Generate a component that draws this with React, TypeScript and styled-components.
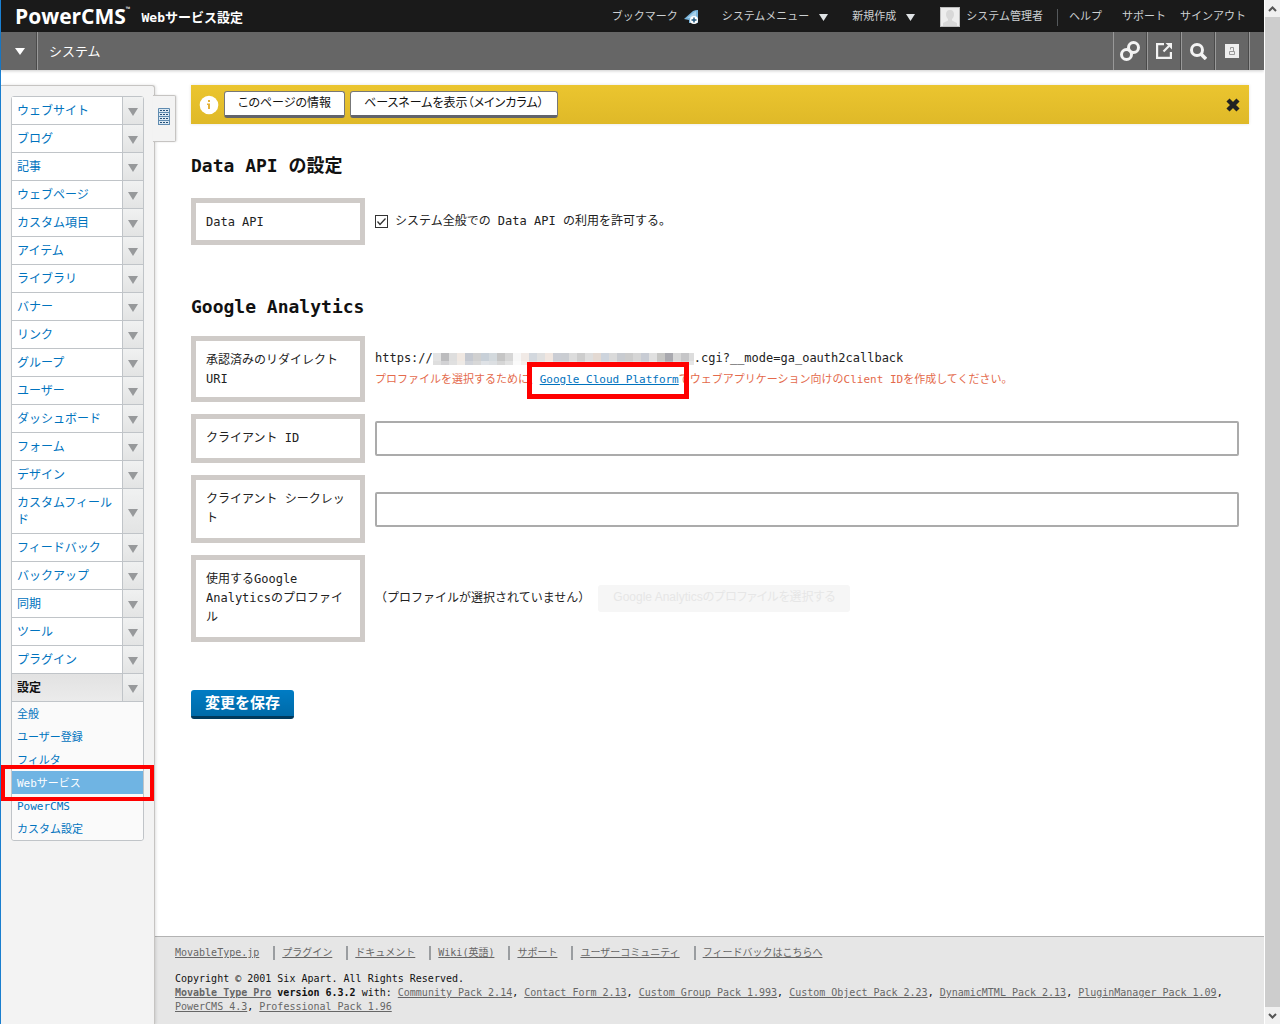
import React from "react";
import styled, { createGlobalStyle, css } from "styled-components";

const mono = `"DejaVu Sans Mono", "Noto Sans CJK JP", monospace`;
const sans = `"Liberation Sans", "Noto Sans CJK JP", sans-serif`;
const blue = "#0073be";

const GlobalStyle = createGlobalStyle`
  *, *::before, *::after { box-sizing: border-box; }
  body { margin: 0; background: #fff; color: #222; font: 12px/19px ${mono}; }
  button, input { font: inherit; margin: 0; }
  ul { list-style: none; margin: 0; padding: 0; }
  h1, h2, p { margin: 0; }
`;

const Page = styled.div`
  display: grid;
  grid-template-columns: minmax(0, 1fr) 16px;
  min-height: 100vh;
  border-left: 1px solid #1a80d2;
`;
const Screen = styled.div`
  display: flex;
  flex-direction: column;
`;

/* window scroll bar */
const ScrollTrack = styled.div`
  position: sticky;
  top: 0;
  display: flex;
  flex-direction: column;
  height: 100vh;
  border-left: 1px solid #fff;
  background: #cdcdcd;
`;
const ScrollArrow = styled.span`
  display: flex;
  align-items: center;
  justify-content: center;
  height: 17px;
  background: #f0f0f0;
`;
const ScrollThumb = styled.div`
  flex: 1;
  background: #cdcdcd;
`;

/* top bar */
const TopBar = styled.header`
  display: flex;
  align-items: center;
  height: 32px;
  padding: 0 18px 0 14px;
  background: #1a1a1a;
  color: #fff;
`;
const Logo = styled.a`
  display: flex;
  color: #fff;
  font: 700 21px/30px "Open Sans", sans-serif;
  text-decoration: none;
`;
const Trademark = styled.sup`
  margin-top: 5px;
  font-size: 6px;
  line-height: 6px;
`;
const PageTitle = styled.h1`
  margin-left: 11px;
  padding-top: 2px;
  font-size: 13px;
  font-weight: bold;
`;
const TopNav = styled.nav`
  display: flex;
  align-items: center;
  margin-left: auto;
  padding-top: 2px;
  font-size: 11px;
`;
const topItem = css`
  display: flex;
  align-items: center;
  padding: 0;
  border: 0;
  background: none;
  color: #ccd0d2;
  font-size: 11px;
  line-height: 20px;
  text-decoration: none;
`;
const TopLink = styled.a<{ $gap?: number }>`
  ${topItem}
  gap: 6px;
  margin-left: ${(p) => p.$gap ?? 0}px;
`;
const TopMenu = styled.button`
  ${topItem}
  gap: 10px;
  margin-left: 24px;
`;
const Separator = styled.span`
  width: 1px;
  height: 17px;
  margin: 0 11px 0 14px;
  background: #55595c;
`;

/* scope bar */
const ScopeBar = styled.div`
  display: flex;
  height: 38px;
  background: #666;
  color: #fff;
  box-shadow: 0 1px 3px rgba(0, 0, 0, 0.2);
`;
const ScopeToggle = styled.button`
  display: flex;
  align-items: center;
  justify-content: center;
  width: 36px;
  padding: 0 0 0 3px;
  border: 0;
  border-right: 1px solid #4a4a4a;
  background: none;
`;
const ScopeName = styled.div`
  display: flex;
  align-items: center;
  flex: 1;
  padding-left: 11px;
  border-left: 1px solid #999;
  font-size: 13px;
`;
const Tools = styled.div`
  display: flex;
  padding-right: 15px;
`;
const Tool = styled.button`
  display: flex;
  align-items: center;
  justify-content: center;
  width: 34px;
  padding: 0;
  border: 0;
  border-left: 1px solid #999;
  border-right: 1px solid #4a4a4a;
  background: none;
  box-shadow: 1px 0 0 #999;
`;

/* body */
const Body = styled.div`
  display: flex;
  flex: 1;
  padding-top: 15px;
`;
const Sidebar = styled.aside`
  position: relative;
  flex: none;
  width: 154px;
  padding: 10px;
  border: 1px solid #c6c4c2;
  border-width: 1px 1px 0 0;
  border-top-right-radius: 3px;
  background: #f3f3f3;
  box-shadow: 1px 0 3px rgba(0, 0, 0, 0.12);
`;
const SidebarTab = styled.button`
  position: absolute;
  top: 9px;
  left: calc(100% - 1px);
  display: flex;
  justify-content: center;
  width: 23px;
  height: 47px;
  padding: 12px 0 0;
  border: 1px solid #c6c4c2;
  border-left: 0;
  border-radius: 0 2px 2px 0;
  background: #f3f3f3;
  box-shadow: 1px 0 2px rgba(0, 0, 0, 0.12);
`;
const Menu = styled.ul`
  width: 133px;
  border: 1px solid #c0c4c8;
  border-radius: 3px;
  background: #fff;
`;
const MenuItem = styled.li`
  & + & { border-top: 1px solid #c0c4c8; }
`;
const MenuRow = styled.div<{ $open?: boolean }>`
  display: grid;
  grid-template-columns: 1fr 21px;
  background: ${(p) => (p.$open ? "linear-gradient(#e2e2e2, #ebebeb)" : "#fff")};
`;
const MenuLink = styled.a<{ $open?: boolean }>`
  padding: 6px 5px 4px;
  color: ${(p) => (p.$open ? "#111" : blue)};
  font-weight: ${(p) => (p.$open ? "bold" : "normal")};
  line-height: 17px;
  text-decoration: none;
`;
const MenuToggle = styled.button`
  display: flex;
  align-items: center;
  justify-content: center;
  padding: 3px 0 0;
  border: 0;
  border-left: 1px solid #c0c4c8;
  background: linear-gradient(#f0f1f1, #e3e4e4);
`;
const SubMenu = styled.ul`
  border-top: 1px solid #c0c4c8;
  border-radius: 0 0 3px 3px;
  background: #fafafa;
`;
const SubItem = styled.li`
  position: relative;
`;
const SubLink = styled.a<{ $current?: boolean }>`
  display: block;
  padding: 2px 5px 0;
  background: ${(p) => (p.$current ? "#6fb4e3" : "none")};
  color: ${(p) => (p.$current ? "#fff" : blue)};
  font-size: 11px;
  line-height: 21px;
  text-decoration: none;
`;
const MenuMarker = styled.span`
  position: absolute;
  inset: -6px -11px -7px -11px;
  border: 4px solid #f00;
  pointer-events: none;
  z-index: 1;
`;

const Column = styled.div`
  display: flex;
  flex: 1;
  flex-direction: column;
  min-width: 0;
`;
const Content = styled.main`
  flex: 1;
  padding: 0 15px 40px 36px;
`;
const Notice = styled.div`
  display: flex;
  align-items: center;
  gap: 5px;
  height: 39px;
  padding: 0 8px;
  background: linear-gradient(#ebc52f, #dfb928);
  box-shadow: 0 0 3px rgba(0, 0, 0, 0.12);
`;
const NoticeButton = styled.button`
  height: 27px;
  padding: 0 13px 1px;
  border: 1px solid #777;
  border-bottom: 3px solid #62646a;
  border-radius: 3px;
  background: #fff;
  color: #111;
  font-family: ${sans};
  font-size: 12px;
  line-height: 20px;
  font-feature-settings: "palt";
`;
const CloseButton = styled.button`
  display: flex;
  margin-left: auto;
  padding: 0;
  border: 0;
  background: none;
`;
const Section = styled.section<{ $gap: number }>`
  display: flex;
  flex-direction: column;
  gap: ${(p) => p.$gap}px;
  margin-top: 29px;
  & + & { margin-top: 49px; }
`;
const Heading = styled.h2`
  color: #111;
  font-size: 18px;
  font-weight: bold;
  line-height: 25px;
`;
const Rows = styled.div`
  display: flex;
  flex-direction: column;
  gap: 12px;
`;
const Row = styled.div`
  display: grid;
  grid-template-columns: 174px minmax(0, 1fr);
  column-gap: 10px;
  align-items: center;
  padding-right: 10px;
`;
const RowLabel = styled.label<{ $compact?: boolean }>`
  padding: 10px 10px ${(p) => (p.$compact ? 8 : 10)}px;
  border: 5px solid #cfcbc8;
  background: #fff;
`;
const CheckLabel = styled.label`
  display: flex;
  align-items: center;
  gap: 7px;
`;
const Check = styled.input`
  appearance: none;
  grid-area: 1 / 1;
  width: 13px;
  height: 13px;
  border: 1px solid #333;
  background: #fff;
  &:not(:checked) + svg { display: none; }
`;
const CheckBox = styled.span`
  display: grid;
  place-items: center;
  svg { grid-area: 1 / 1; pointer-events: none; }
`;
const TextInput = styled.input`
  width: 100%;
  height: 35px;
  padding: 0 8px;
  border: 2px solid #ababab;
  border-radius: 2px;
  background: #fff;
`;
const Uri = styled.p`
  display: flex;
  align-items: center;
  line-height: 21px;
`;
const Mosaic = styled.span`
  display: grid;
  grid-template-columns: repeat(33, 8px);
  grid-auto-rows: 8px 4px;
  width: 261px;
  overflow: hidden;
`;
const Tile = styled.span<{ $color: string }>`
  background: ${(p) => p.$color};
`;
const Hint = styled.p`
  color: #e46a4c;
  font-size: 11px;
  line-height: 21px;
`;
const Marked = styled.span`
  position: relative;
`;
const LinkMarker = styled.span`
  position: absolute;
  inset: -11px -10px -13px -13px;
  border: 5px solid #f00;
  pointer-events: none;
`;
const TextLink = styled.a`
  color: ${blue};
`;
const Profile = styled.div`
  display: flex;
  align-items: center;
  gap: 8px;
`;
const ProfileButton = styled.button`
  height: 27px;
  padding: 0 15px 2px;
  border: 0;
  border-radius: 3px;
  background: #f6f6f6;
  color: #e6e6e6;
  font-family: ${sans};
  font-size: 12px;
  font-feature-settings: "palt";
`;
const SaveButton = styled.button`
  height: 29px;
  margin-top: 48px;
  padding: 0 14px;
  border: 0;
  border-bottom: 3px solid #00395c;
  border-radius: 3px;
  background: linear-gradient(#007cc4, #006aa8);
  color: #fff;
  font-family: ${sans};
  font-size: 15px;
  font-weight: bold;
  line-height: 24px;
`;

/* footer */
const Footer = styled.footer`
  padding: 9px 15px 10px 20px;
  border-top: 1px solid #b3b3b3;
  background: #e6e6e6;
  color: #111;
  font-size: 10px;
  line-height: 14px;
`;
const FooterLinks = styled.ul`
  display: flex;
  margin-bottom: 12px;
`;
const FooterItem = styled.li`
  padding-right: 14px;
  & + & {
    padding-left: 7px;
    border-left: 2px solid #9a9da0;
  }
`;
const FooterLink = styled.a`
  color: #666;
`;

const Triangle = ({ color, w = 10, h = 8 }: { color: string; w?: number; h?: number }) => (
  <svg width={w} height={h} viewBox="0 0 10 8" preserveAspectRatio="none" aria-hidden="true">
    <path d="M0 0h10L5 8z" fill={color} />
  </svg>
);

const menu = [
  "ウェブサイト", "ブログ", "記事", "ウェブページ", "カスタム項目", "アイテム", "ライブラリ",
  "バナー", "リンク", "グループ", "ユーザー", "ダッシュボード", "フォーム", "デザイン",
  "カスタムフィールド", "フィードバック", "バックアップ", "同期", "ツール", "プラグイン", "設定",
];
const settings = ["全般", "ユーザー登録", "フィルタ", "Webサービス", "PowerCMS", "カスタム設定"];
const footerLinks = [
  "MovableType.jp", "プラグイン", "ドキュメント", "Wiki(英語)", "サポート",
  "ユーザーコミュニティ", "フィードバックはこちらへ",
];
const packs = [
  "Community Pack 2.14", "Contact Form 2.13", "Custom Group Pack 1.993",
  "Custom Object Pack 2.23", "DynamicMTML Pack 2.13", "PluginManager Pack 1.09",
  "PowerCMS 4.3", "Professional Pack 1.96",
];
const tilesTop = (
  "e3e3e3 bcbcbe dedede f0e8e2 c4c8d0 d0d0d0 c8d0d8 d3d9dd c5c5c5 d6d6d6 f7f7f7 f1eae6 d3d8de " +
  "e0e0e0 f0e6e0 cacdd4 cacdd2 dcdcdc cdcdcd dedede e3d9d2 cdd4dd dadada c8cbd0 cccccc d6d6d6 " +
  "c8ccd4 e0e0e0 c6c6c4 a9a9af d8d8d8 c6c6c8 dddddd"
).split(" ");
const tilesBottom = (
  "dedede d2d2d4 e0e0e0 eeeae6 d0d3d9 d8d8d8 dfe2e6 dcdfe2 d6d6d6 e2e2e2 fafafa f5f0ec dde0e4 " +
  "e6e6e6 f3ece8 d6d9de d6d8dc e4e4e4 d8d8d8 e6e6e6 e9e1dc d8dde3 e2e2e2 d4d7db d8d8d8 e0e0e0 " +
  "d4d7dd e8e8e8 d0d0ce bababf e0e0e0 d2d2d4 e6e6e6"
).split(" ");

export default function App() {
  return (
    <>
      <GlobalStyle />
      <Page>
        <Screen>
          <TopBar>
            <Logo href="#">PowerCMS<Trademark>™</Trademark></Logo>
            <PageTitle>Webサービス設定</PageTitle>
            <TopNav>
              <TopLink href="#">
                ブックマーク
                <svg width="14" height="15" viewBox="0 0 14 15" aria-hidden="true">
                  <path d="M0 9L9 1Q11 0 14 0V13H5V10z" fill="#79b5dc" />
                  <path d="M3 8L12 1V8z" fill="#a9d1ea" />
                  <circle cx="10" cy="10" r="4" fill="#fff" />
                  <path d="M10 7.500v5M7.500 10h5" stroke="#22587d" strokeWidth="1.500" />
                </svg>
              </TopLink>
              <TopMenu>システムメニュー<Triangle color="#dfe3e5" w={9} h={7} /></TopMenu>
              <TopMenu>新規作成<Triangle color="#dfe3e5" w={9} h={7} /></TopMenu>
              <TopLink href="#" $gap={25}>
                <svg width="20" height="20" viewBox="0 0 20 20" aria-hidden="true">
                  <path d="M0 0h20v20H0z" fill="#bdbdbd" />
                  <path d="M1 1h18v18H1z" fill="#ededed" />
                  <path d="M10 3c-3 0-4 2-4 4.500S7 11 8 12v1.500L3 16v3h14v-3l-5-2.500V12c1-1 2-2 2-4.500S13 3 10 3z" fill="#d8d8d8" />
                </svg>
                システム管理者
              </TopLink>
              <Separator />
              <TopLink href="#">ヘルプ</TopLink>
              <TopLink href="#" $gap={20}>サポート</TopLink>
              <TopLink href="#" $gap={14}>サインアウト</TopLink>
            </TopNav>
          </TopBar>

          <ScopeBar>
            <ScopeToggle aria-label="スコープ"><Triangle color="#fff" w={10} h={7} /></ScopeToggle>
            <ScopeName>システム</ScopeName>
            <Tools>
              <Tool aria-label="リンク">
                <svg width="20" height="20" viewBox="0 0 20 20" fill="none" stroke="#f3f3f3" strokeWidth="3" aria-hidden="true">
                  <circle cx="13.500" cy="6.500" r="5" />
                  <circle cx="6.500" cy="13.500" r="5" />
                </svg>
              </Tool>
              <Tool aria-label="表示">
                <svg width="16" height="16" viewBox="0 0 16 16" fill="none" stroke="#f3f3f3" strokeWidth="2.200" aria-hidden="true">
                  <path d="M8 1.100H1.100v13.800h13.800V9" />
                  <path d="M7.500 8.500L13 3" />
                  <path d="M9.500 0H16v6.500z" fill="#f3f3f3" stroke="none" />
                </svg>
              </Tool>
              <Tool aria-label="検索">
                <svg width="17" height="17" viewBox="0 0 17 17" fill="none" stroke="#f3f3f3" aria-hidden="true">
                  <circle cx="7" cy="7" r="5.500" strokeWidth="3" />
                  <path d="M11 11l5 5" strokeWidth="3.600" />
                </svg>
              </Tool>
              <Tool aria-label="ロック">
                <svg width="14" height="14" viewBox="0 0 14 14" aria-hidden="true">
                  <path d="M0 0h14v14H0z" fill="#eee" />
                  <path d="M4.500 7.500h5v3h-5zM5.500 5.500v-2h3v4" fill="none" stroke="#999" />
                </svg>
              </Tool>
            </Tools>
          </ScopeBar>

          <Body>
            <Sidebar>
              <Menu>
                {menu.map((name) => {
                  const open = name === "設定";
                  return (
                    <MenuItem key={name}>
                      <MenuRow $open={open}>
                        <MenuLink href="#" $open={open}>{name}</MenuLink>
                        <MenuToggle aria-label={name}><Triangle color="#97999b" /></MenuToggle>
                      </MenuRow>
                      {open && (
                        <SubMenu>
                          {settings.map((s) => (
                            <SubItem key={s}>
                              <SubLink href="#" $current={s === "Webサービス"}>{s}</SubLink>
                              {s === "Webサービス" && <MenuMarker />}
                            </SubItem>
                          ))}
                        </SubMenu>
                      )}
                    </MenuItem>
                  );
                })}
              </Menu>
              <SidebarTab aria-label="メニュー">
                <svg width="12" height="18" viewBox="0 0 12 18" aria-hidden="true">
                  <path d="M0 1q0-1 1-1h10q1 0 1 1v16H0z" fill="#5f8bb0" />
                  {[1, 5, 9, 13].map((y) => (
                    <g key={y}>
                      <path d={`M1 ${y}h10v3H1z`} fill="#dbe8f2" />
                      <path d={`M2 ${y + 1.5}h8`} stroke="#234f78" strokeDasharray="2 1" />
                    </g>
                  ))}
                </svg>
              </SidebarTab>
            </Sidebar>

            <Column>
              <Content>
                <Notice>
                  <svg width="20" height="20" viewBox="0 0 20 20" aria-hidden="true">
                    <circle cx="10" cy="10" r="9.300" fill="#fff" />
                    <path d="M9 5h2v2H9zM8 8.500h3V14H9v-4H8z" fill="#e3b23a" />
                  </svg>
                  <NoticeButton>このページの情報</NoticeButton>
                  <NoticeButton>ベースネームを表示（メインカラム）</NoticeButton>
                  <CloseButton aria-label="閉じる">
                    <svg width="16" height="16" viewBox="0 0 16 16" aria-hidden="true">
                      <path d="M3 3l10 10M13 3L3 13" stroke="#222" strokeWidth="4.400" />
                    </svg>
                  </CloseButton>
                </Notice>

                <Section $gap={20}>
                  <Heading>Data API の設定</Heading>
                  <Row>
                    <RowLabel as="div" $compact>Data API</RowLabel>
                    <CheckLabel>
                      <CheckBox>
                        <Check type="checkbox" defaultChecked />
                        <svg width="13" height="13" viewBox="0 0 13 13" fill="none" stroke="#333" strokeWidth="1.300" aria-hidden="true">
                          <path d="M2.500 6.500L5 9.500 10.500 3.500" />
                        </svg>
                      </CheckBox>
                      システム全般での Data API の利用を許可する。
                    </CheckLabel>
                  </Row>
                </Section>

                <Section $gap={17}>
                  <Heading>Google Analytics</Heading>
                  <Rows>
                    <Row>
                      <RowLabel as="div" $compact>承認済みのリダイレクト URI</RowLabel>
                      <div>
                        <Uri>
                          https://
                          <Mosaic>
                            {[...tilesTop, ...tilesBottom].map((c, i) => (
                              <Tile key={i} $color={`#${c}`} />
                            ))}
                          </Mosaic>
                          .cgi?__mode=ga_oauth2callback
                        </Uri>
                        <Hint>
                          プロファイルを選択するために、
                          <Marked>
                            <TextLink href="#">Google Cloud Platform</TextLink>
                            <LinkMarker />
                          </Marked>
                          でウェブアプリケーション向けのClient IDを作成してください。
                        </Hint>
                      </div>
                    </Row>
                    <Row>
                      <RowLabel htmlFor="client-id">クライアント ID</RowLabel>
                      <TextInput id="client-id" type="text" />
                    </Row>
                    <Row>
                      <RowLabel htmlFor="client-secret">クライアント シークレット</RowLabel>
                      <TextInput id="client-secret" type="text" />
                    </Row>
                    <Row>
                      <RowLabel as="div">使用するGoogle Analyticsのプロファイル</RowLabel>
                      <Profile>
                        （プロファイルが選択されていません）
                        <ProfileButton disabled>Google Analyticsのプロファイルを選択する</ProfileButton>
                      </Profile>
                    </Row>
                  </Rows>
                </Section>
                <SaveButton>変更を保存</SaveButton>
              </Content>

              <Footer>
                <FooterLinks>
                  {footerLinks.map((l) => (
                    <FooterItem key={l}><FooterLink href="#">{l}</FooterLink></FooterItem>
                  ))}
                </FooterLinks>
                <p>Copyright © 2001 Six Apart. All Rights Reserved.</p>
                <p>
                  <b><FooterLink href="#">Movable Type Pro</FooterLink> version 6.3.2</b> with:{" "}
                  {packs.map((p, i) => (
                    <React.Fragment key={p}>
                      {i > 0 && ", "}
                      <FooterLink href="#">{p}</FooterLink>
                    </React.Fragment>
                  ))}
                </p>
              </Footer>
            </Column>
          </Body>
        </Screen>
        <ScrollTrack aria-hidden="true">
          <ScrollArrow>
            <svg width="9" height="6" viewBox="0 0 9 6" fill="none" stroke="#555" strokeWidth="2"><path d="M1 5l3.500-3.500L8 5" /></svg>
          </ScrollArrow>
          <ScrollThumb />
          <ScrollArrow>
            <svg width="9" height="6" viewBox="0 0 9 6" fill="none" stroke="#555" strokeWidth="2"><path d="M1 1l3.500 3.500L8 1" /></svg>
          </ScrollArrow>
        </ScrollTrack>
      </Page>
    </>
  );
}
